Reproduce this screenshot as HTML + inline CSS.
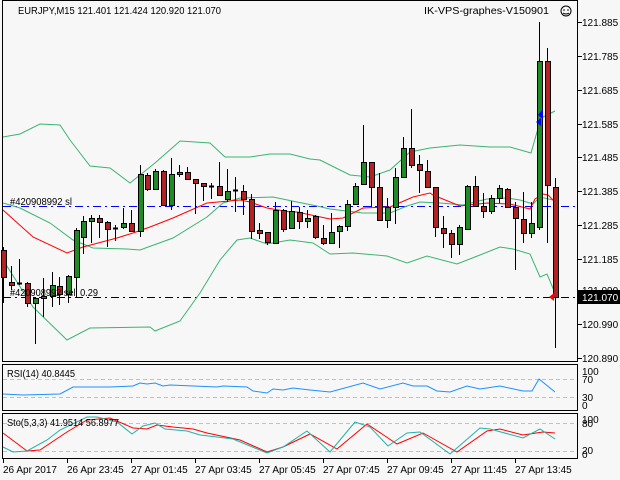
<!DOCTYPE html>
<html><head><meta charset="utf-8"><style>
html,body{margin:0;padding:0;background:#f7f7f7;}
svg{display:block;font-family:"Liberation Sans",Tahoma,sans-serif;font-size:10px;}
</style></head><body>
<svg id="s" width="620" height="480" xmlns="http://www.w3.org/2000/svg">
<rect width="620" height="480" fill="#f7f7f7"/>
<g fill="none" stroke="#000" stroke-width="1">
<rect x="2.5" y="0.5" width="575" height="361"/>
<rect x="2.5" y="364.5" width="575" height="46"/>
<rect x="2.5" y="413.5" width="575" height="45"/>
</g>
<g stroke="#c0c0c0" stroke-dasharray="4,3">
<line x1="3" y1="379.5" x2="577" y2="379.5"/>
<line x1="3" y1="397.5" x2="577" y2="397.5"/>
<line x1="3" y1="423.5" x2="577" y2="423.5"/>
<line x1="3" y1="451.5" x2="577" y2="451.5"/>
</g>
<line x1="3" y1="206.5" x2="577" y2="206.5" stroke="#0000ff" stroke-dasharray="8,4,2,4"/>
<line x1="3" y1="297.5" x2="577" y2="297.5" stroke="#000" stroke-dasharray="8,4,2,4"/>
<g fill="none" stroke-width="1">
<polyline stroke="#3cb371" points="3,137 20,134 40,124 60,125 70,140 90,166 110,168 130,183 140,175 155,163 180,141 210,143 225,157 250,157 270,154 290,154 310,159 320,160 340,170 350,175 370,177 390,170 410,152 430,148 460,145 490,147 510,147 531,153 541,118 555,111"/>
<polyline stroke="#3cb371" points="3,203 20,208 50,223 73,240 93,248 127,249 140,250 173,238 207,217 223,203 240,198 273,197 297,202 317,206 330,209 363,213 390,213 407,206 420,202 440,203 463,205 487,199 507,198 520,200 533,204 540,197 553,200"/>
<polyline stroke="#3cb371" points="3,260 33,307 67,340 90,328 150,327 155,331 180,321 200,293 220,260 237,240 250,238 267,244 290,240 313,243 330,254 353,253 387,256 407,263 427,256 457,264 480,255 500,247 513,249 530,254 540,277 547,274 555,293"/>
<polyline stroke="#ff0000" points="3,210 33,237 67,253 83,247 117,238 133,233 150,227 173,218 207,203 240,200 250,202 267,208 290,212 297,212 330,219 343,218 363,208 390,207 413,197 430,193 433,195 460,206 487,203 510,204 530,209 535,199 543,194 548,195 555,202"/>
<polyline stroke="#1e90ff" points="3,394 23,395 60,394 73,387 110,387 133,386 140,383 147,384 155,383 163,386 170,385 217,387 223,386 247,387 253,391 267,393 273,389 283,390 293,388 310,390 330,392 363,383 380,389 403,383 413,386 427,386 437,391 450,392 467,386 480,389 500,386 523,391 532,391 539,379 555,392"/>
<polyline stroke="#ff0000" points="3,433 27,451 40,450 67,432 87,420 110,418 133,428 147,429 157,425 173,427 193,429 207,433 240,440 267,452 283,447 310,434 337,449 367,424 397,444 423,433 457,452 487,431 500,429 523,435 543,432 555,433"/>
<polyline stroke="#20b2aa" points="3,447 13,452 27,451 47,440 60,430 87,417 97,417 117,422 132,434 143,426 155,423 165,429 187,431 200,435 217,437 233,439 267,453 283,447 307,431 330,452 355,422 370,427 388,446 407,433 420,432 450,454 480,428 490,429 523,438 540,429 555,439"/>
</g>
<g id="c"></g>
<g fill="#0000ff"><path d="M536,122 l5,-4 l0,8 z"/><path d="M538,115 l5,-6 l0,10 z"/></g>
<path d="M549,297 l5,-4 l0,8 z" fill="#ff0000"/>
<g fill="#000">
<text x="18" y="14" textLength="203" lengthAdjust="spacingAndGlyphs">EURJPY,M15 121.401 121.424 120.920 121.070</text>
<text x="424" y="14" textLength="125" lengthAdjust="spacingAndGlyphs">IK-VPS-graphes-V150901</text>
<text x="10" y="205" textLength="62" lengthAdjust="spacingAndGlyphs">#420908992 sl</text>
<text x="10" y="296" textLength="88" lengthAdjust="spacingAndGlyphs">#420908992 sell 0.29</text>
<text x="7" y="377" textLength="68" lengthAdjust="spacingAndGlyphs">RSI(14) 40.8445</text>
<text x="7" y="426" textLength="112" lengthAdjust="spacingAndGlyphs">Sto(5,3,3) 41.9514 56.8977</text>
</g>
<circle cx="566" cy="11" r="5" fill="none" stroke="#000"/>
<circle cx="564" cy="10" r="0.8"/><circle cx="568" cy="10" r="0.8"/>
<path d="M563,13 q3,2 6,0" fill="none" stroke="#000"/>
<g fill="#000">
<text x="582" y="26">121.885</text><text x="582" y="60">121.785</text><text x="582" y="94">121.685</text>
<text x="582" y="128">121.585</text><text x="582" y="161">121.485</text><text x="582" y="195">121.385</text>
<text x="582" y="229">121.285</text><text x="582" y="263">121.185</text><text x="582" y="294">121.090</text>
<text x="582" y="328">120.990</text><text x="582" y="362">120.890</text>
<text x="582" y="375">100</text><text x="582" y="383">70</text><text x="582" y="401">30</text><text x="582" y="409">0</text>
<text x="582" y="423">100</text><text x="582" y="427">80</text><text x="582" y="454">20</text><text x="582" y="458">0</text>
</g>
<g stroke="#000"><line x1="578" x2="582" y1="22.5" y2="22.5"/><line x1="578" x2="582" y1="56.5" y2="56.5"/><line x1="578" x2="582" y1="90.5" y2="90.5"/><line x1="578" x2="582" y1="124.5" y2="124.5"/><line x1="578" x2="582" y1="157.5" y2="157.5"/><line x1="578" x2="582" y1="191.5" y2="191.5"/><line x1="578" x2="582" y1="225.5" y2="225.5"/><line x1="578" x2="582" y1="259.5" y2="259.5"/><line x1="578" x2="582" y1="324.5" y2="324.5"/><line x1="578" x2="582" y1="358.5" y2="358.5"/></g>
<rect x="578" y="290" width="42" height="14" fill="#000"/>
<text x="582" y="301" fill="#fff">121.070</text>
<g fill="#000">
<text x="3" y="473">26 Apr 2017</text><text x="67" y="473">26 Apr 23:45</text><text x="131" y="473">27 Apr 01:45</text>
<text x="195" y="473">27 Apr 03:45</text><text x="259" y="473">27 Apr 05:45</text><text x="323" y="473">27 Apr 07:45</text>
<text x="387" y="473">27 Apr 09:45</text><text x="451" y="473">27 Apr 11:45</text><text x="515" y="473">27 Apr 13:45</text>
</g>
<g stroke="#000"><line x1="3.5" x2="3.5" y1="459" y2="463"/><line x1="67.5" x2="67.5" y1="459" y2="463"/><line x1="131.5" x2="131.5" y1="459" y2="463"/><line x1="195.5" x2="195.5" y1="459" y2="463"/><line x1="259.5" x2="259.5" y1="459" y2="463"/><line x1="323.5" x2="323.5" y1="459" y2="463"/><line x1="387.5" x2="387.5" y1="459" y2="463"/><line x1="451.5" x2="451.5" y1="459" y2="463"/><line x1="515.5" x2="515.5" y1="459" y2="463"/></g>
</svg>
<script>
var d=[[3,250,277,247,303],[11,282,285,266,290],[19,283,284,259,285],[27,283,303,282,307],[35,303,298,297,344],[43,298,296,278,317],[52,296,285,272,307],[59,286,294,277,305],[68,294,276,275,303],[76,277,230,228,297],[83,237,221,216,254],[91,221,218,215,243],[99,218,222,215,238],[107,222,229,221,247],[115,228,229,225,241],[123,227,223,208,229],[131,223,231,210,232],[140,231,174,165,237],[147,175,189,173,191],[155,189,171,169,189],[163,171,205,170,206],[171,205,174,158,210],[179,174,172,165,177],[187,172,179,167,180],[195,179,183,179,214],[203,183,186,183,201],[211,186,187,183,199],[219,186,195,162,196],[227,199,191,169,202],[235,190,191,177,212],[243,191,199,185,215],[251,199,231,194,239],[259,230,233,223,239],[267,232,242,232,245],[275,243,210,202,244],[283,210,229,209,232],[291,228,211,201,229],[299,212,221,207,229],[307,221,218,210,228],[315,216,237,215,239],[323,238,243,225,245],[331,243,232,213,244],[339,231,226,225,248],[347,226,204,200,231],[355,204,186,183,205],[363,184,162,125,185],[371,162,187,162,207],[379,187,220,173,221],[387,220,207,198,228],[395,207,177,168,224],[403,177,148,137,178],[411,148,165,109,168],[419,164,170,155,193],[427,171,187,160,188],[435,187,227,187,237],[443,228,233,216,248],[451,233,244,230,258],[459,244,227,225,255],[467,229,186,185,230],[475,186,206,176,206],[483,206,211,193,218],[491,211,198,195,214],[499,198,188,185,203],[507,189,207,188,208],[515,207,218,202,270],[523,219,233,192,243],[531,233,223,202,238],[539,227,61,22,230],[547,61,185,48,243],[555,187,297,178,348]];
var g=document.getElementById('c'),h='';
d.forEach(function(c){var x=c[0],o=c[1],cl=c[2],hi=c[3],lo=c[4];var t=Math.min(o,cl),b=Math.max(o,cl);var col=cl<o?'#1f8b24':'#b22222';
h+='<line x1="'+(x+.5)+'" x2="'+(x+.5)+'" y1="'+hi+'" y2="'+lo+'" stroke="#000"/>';
if(b-t<2){h+='<line x1="'+(x-2)+'" x2="'+(x+3)+'" y1="'+(t+.5)+'" y2="'+(t+.5)+'" stroke="#000" stroke-width="2"/>';}
else h+='<rect x="'+(x-1.5)+'" y="'+(t+.5)+'" width="5" height="'+(b-t)+'" fill="'+col+'" stroke="#000"/>';});
g.innerHTML=h;
</script>
</body></html>
